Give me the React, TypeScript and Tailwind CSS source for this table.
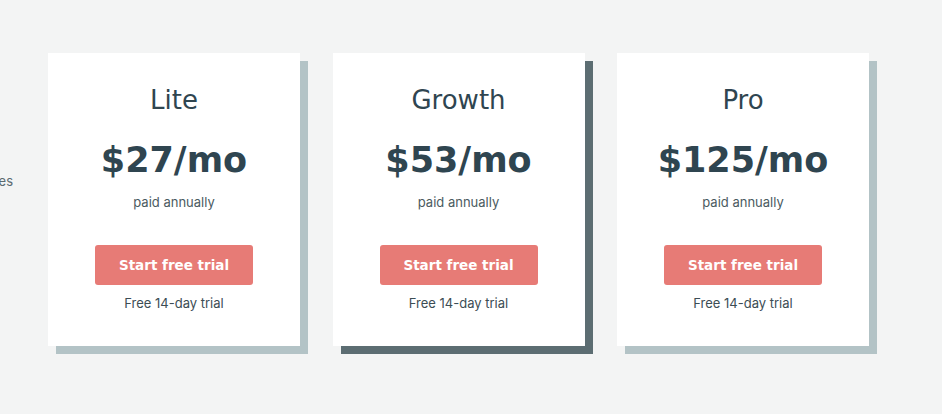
import React from "react";

interface Plan {
  name: string;
  price: string;
  featured?: boolean;
}

const plans: Plan[] = [
  { name: "Lite", price: "$27/mo" },
  { name: "Growth", price: "$53/mo", featured: true },
  { name: "Pro", price: "$125/mo" },
];

function PlanCard({ plan }: { plan: Plan }) {
  return (
    <div
      className={
        plan.featured
          ? "flex h-[293px] w-[252px] shrink-0 flex-col items-center bg-white pt-[34px] shadow-[8px_8px_0_#5c6d72]"
          : "flex h-[293px] w-[252px] shrink-0 flex-col items-center bg-white pt-[34px] shadow-[8px_8px_0_#b3c3c6]"
      }
    >
      <h3 className="font-['DejaVu_Sans',sans-serif] text-[26px] leading-[26px] font-normal text-[#2f4550]">
        {plan.name}
      </h3>
      <div className="mt-[30px] font-['DejaVu_Sans',sans-serif] text-[35px] leading-[34px] font-bold text-[#2f4550]">
        {plan.price}
      </div>
      <p className="mt-[17px] font-['Inter',sans-serif] text-[13px] leading-[16px] text-[#4b5b61]">
        paid annually
      </p>
      <button className="mt-[35px] flex h-[40px] w-[158px] items-center justify-center rounded-[3px] bg-[#e77b76] font-['DejaVu_Sans',sans-serif] text-[13.5px] font-bold text-white">
        Start free trial
      </button>
      <p className="mt-[10px] font-['Inter',sans-serif] text-[13px] leading-[16px] text-[#3c4d54]">
        Free 14-day trial
      </p>
    </div>
  );
}

export default function App() {
  return (
    <div className="flex h-[414px] w-[942px] overflow-hidden bg-[#f3f4f4] pt-[53px]">
      {/* side nav, clipped by the viewport edge */}
      <div className="mt-[120px] w-[13px] shrink-0 overflow-hidden">
        <div className="flex justify-end">
          <span className="whitespace-nowrap font-['Inter',sans-serif] text-[13px] leading-[16px] text-[#5a6a70]">
            Templates
          </span>
        </div>
      </div>
      <div className="ml-[35px] flex gap-[32.5px]">
        {plans.map((p) => (
          <PlanCard key={p.name} plan={p} />
        ))}
      </div>
    </div>
  );
}
